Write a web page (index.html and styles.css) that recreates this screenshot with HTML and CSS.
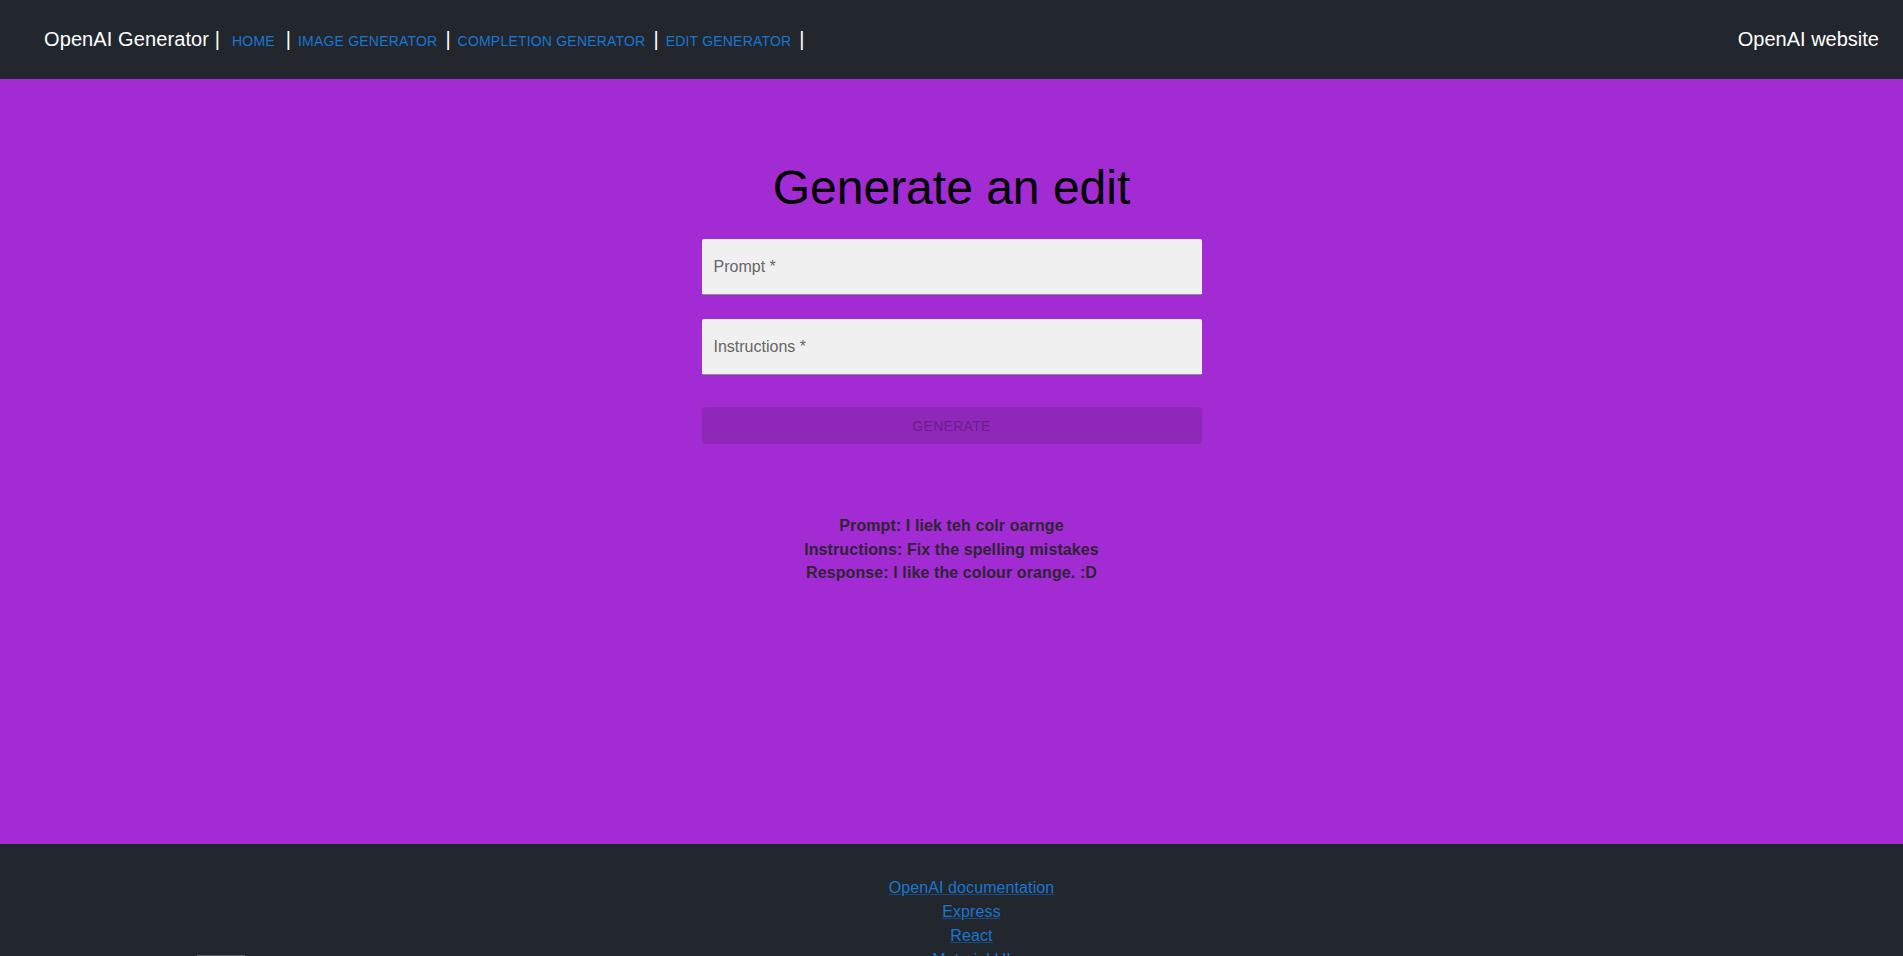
FILE: index.html
```html
<!DOCTYPE html>
<html lang="en">
<head>
<meta charset="utf-8">
<title>OpenAI Generator</title>
<link rel="stylesheet" href="styles.css">
</head>
<body>
<header class="topbar">
  <nav class="nav">
    <span class="brand">OpenAI Generator |</span>
    <a class="nav-link nav-home" href="#">HOME</a><span class="sep">|</span>
    <a class="nav-link" href="#">IMAGE GENERATOR</a><span class="sep">|</span>
    <a class="nav-link" href="#">COMPLETION GENERATOR</a><span class="sep">|</span>
    <a class="nav-link" href="#">EDIT GENERATOR</a><span class="sep">|</span>
  </nav>
  <a class="site-link" href="#">OpenAI website</a>
</header>

<main class="main">
  <h1 class="title">Generate an edit</h1>
  <form class="form">
    <label class="field"><span class="field-label">Prompt *</span></label>
    <label class="field"><span class="field-label">Instructions *</span></label>
    <button class="generate" type="button" disabled>GENERATE</button>
  </form>
  <div class="result">
    <div>Prompt: I liek teh colr oarnge</div>
    <div>Instructions: Fix the spelling mistakes</div>
    <div>Response: I like the colour orange. :D</div>
  </div>
</main>

<footer class="footer">
  <div class="footer-left"><div class="footer-logo"></div></div>
  <div class="footer-links">
    <a href="#">OpenAI documentation</a>
    <a href="#">Express</a>
    <a href="#">React</a>
    <a href="#">Material UI</a>
  </div>
  <div class="footer-right"></div>
</footer>
</body>
</html>
```

FILE: styles.css
```css
* { box-sizing: border-box; }

html, body {
  margin: 0;
  padding: 0;
}

body {
  font-family: "Liberation Sans", Arial, sans-serif;
  background: #22272e;
}

.topbar {
  height: 79px;
  background: #22272e;
  display: flex;
  align-items: center;
  justify-content: space-between;
  padding: 0 24px 0 44px;
}

.nav {
  display: flex;
  align-items: baseline;
}

.brand {
  color: #ffffff;
  font-size: 20px;
  letter-spacing: 0.1px;
}

.sep {
  color: #ffffff;
  font-size: 20px;
}

.nav-link {
  color: #1976d2;
  font-size: 14px;
  letter-spacing: 0.2px;
  text-decoration: none;
  margin: 0 8px 0 7px;
}

.nav-home {
  margin-left: 12px;
  margin-right: 11px;
}

.site-link {
  color: #ffffff;
  font-size: 20px;
  text-decoration: none;
}

.main {
  min-height: 80vh;
  background: #a32bd4;
  padding-top: 82px;
  display: flex;
  flex-direction: column;
  align-items: center;
}

.title {
  margin: 0;
  font-size: 48px;
  font-weight: 400;
  line-height: 54px;
  color: #000000;
}

.form {
  width: 500px;
  margin-top: 24px;
  display: flex;
  flex-direction: column;
}

.field {
  height: 56px;
  background: #f0f0f0;
  border-bottom: 1px solid #8b8b8b;
  border-radius: 2px 2px 0 0;
  display: flex;
  align-items: center;
  padding: 0 12px;
  margin-bottom: 24px;
}

.field-label {
  font-size: 16px;
  color: #666666;
}

.generate {
  margin-top: 8px;
  height: 37px;
  border: none;
  border-radius: 4px;
  background: #8f27b9;
  color: #6c1d8a;
  font-family: "Liberation Sans", Arial, sans-serif;
  font-size: 14px;
  letter-spacing: 0.3px;
  padding: 0;
}

.result {
  margin-top: 70px;
  text-align: center;
  font-weight: 700;
  font-size: 16px;
  letter-spacing: 0.1px;
  line-height: 23.5px;
  color: #2e2433;
}

.footer {
  background: #22272e;
  display: grid;
  grid-template-columns: 1fr auto 1fr;
  padding-bottom: 40px;
}

.footer-left {
  padding: 111px 0 0 197px;
}

.footer-logo {
  width: 48px;
  height: 40px;
  background: #5b5e60;
}

.footer-links {
  padding: 32px 0 0 40px;
  display: flex;
  flex-direction: column;
  align-items: center;
}

.footer-links a {
  color: #1976d2;
  font-size: 16px;
  line-height: 24px;
  letter-spacing: 0.1px;
  text-decoration: underline;
  text-decoration-color: rgba(25, 118, 210, 0.45);
}
```
